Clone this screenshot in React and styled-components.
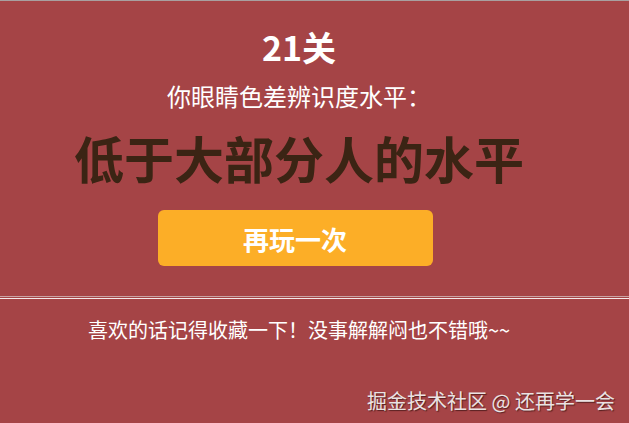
import React from "react";
import styled, { createGlobalStyle } from "styled-components";

const GlobalStyle = createGlobalStyle`
  html, body {
    margin: 0;
    padding: 0;
    background: #a54446;
  }
  body {
    font-family: "Noto Sans CJK SC", "Noto Sans", sans-serif;
    width: 629px;
    height: 423px;
    overflow: hidden;
  }
`;

const Screen = styled.div`
  height: 423px;
  box-sizing: border-box;
  border-top: 1px solid #a8a0a0;
  display: flex;
  flex-direction: column;
`;

const ResultColumn = styled.section`
  width: 598px;
  display: flex;
  flex-direction: column;
  align-items: center;
  padding-top: 22px;
`;

const Level = styled.h1`
  margin: 0;
  color: #ffffff;
  font-size: 34px;
  font-weight: 700;
  line-height: 48px;
`;

const Prompt = styled.p`
  margin: 8px 0 0;
  color: #ffffff;
  font-size: 24px;
  line-height: 34px;
`;

const Verdict = styled.h2`
  margin: 14px 0 0;
  color: #3b2414;
  font-size: 50px;
  font-weight: 700;
  line-height: 60px;
`;

const ReplayButton = styled.button`
  margin: 23px 8px 0 0;
  width: 275px;
  height: 56px;
  border: none;
  border-radius: 6px;
  background: #fcae27;
  color: #ffffff;
  font-family: inherit;
  font-size: 26px;
  font-weight: 700;
  cursor: pointer;
`;

/* inset-style rule: a muted top edge and a bright bottom edge */
const Divider = styled.hr`
  margin: 30px 0 0;
  height: 1px;
  border: none;
  border-top: 1px solid #c9a3a4;
  border-bottom: 1px solid #f6e8e8;
`;

const Tip = styled.p`
  width: 598px;
  margin: 17px 0 0;
  text-align: center;
  color: #ffffff;
  font-size: 20px;
  line-height: 28px;
  font-weight: 400;
`;

const Credit = styled.footer`
  margin-top: auto;
  padding: 0 14px 8px 0;
  text-align: right;
  color: #ebe3e3;
  font-size: 20px;
  line-height: 28px;
  text-shadow: 1px 1px 1px rgba(60, 20, 20, 0.75);
`;

export default function App() {
  return (
    <>
      <GlobalStyle />
      <Screen>
        <ResultColumn>
          <Level>21关</Level>
          <Prompt>你眼睛色差辨识度水平：</Prompt>
          <Verdict>低于大部分人的水平</Verdict>
          <ReplayButton>再玩一次</ReplayButton>
        </ResultColumn>
        <Divider />
        <Tip>喜欢的话记得收藏一下！没事解解闷也不错哦~~</Tip>
        <Credit>掘金技术社区 @ 还再学一会</Credit>
      </Screen>
    </>
  );
}
